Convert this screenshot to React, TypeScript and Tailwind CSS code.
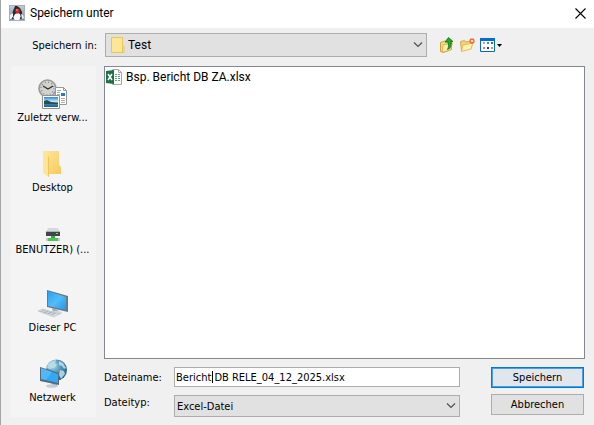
import type { ReactNode } from 'react'

function JavaIcon() {
  return (
    <svg width="16" height="16" viewBox="0 0 16 16" aria-hidden>
      <defs>
        <linearGradient id="java" x1="0" y1="0" x2="0" y2="1">
          <stop offset="0" stopColor="#c3d0dc" />
          <stop offset="1" stopColor="#73869b" />
        </linearGradient>
      </defs>
      <rect x=".5" y=".5" width="15" height="15" fill="url(#java)" stroke="#a3b0bc" />
      <path d="M6 1h2l3 2 2 4v3l1 3h-2l-2-3H6l-2 3H2l1-3 1-4z" fill="#2a2a2a" />
      <path d="M6 9l3-1 2 1 1 4-2 2H6l-2-2z" fill="#f6f7f8" />
      <path d="M1 10l3-2v4l-2 2H1zM12 9l2 1 1 3-2 1z" fill="#eef2f5" />
      <path d="M3 13l1-1 1 2H3zM11 12l2 1-1 1h-1z" fill="#303030" />
      <circle cx="8.500" cy="6" r="2.400" fill="#d32323" />
      <circle cx="8" cy="5" r="1" fill="#f87b70" />
    </svg>
  )
}

function FolderIcon() {
  return (
    <svg width="14" height="16" viewBox="0 0 14 16" aria-hidden>
      <path d="M.5.5h11v9h1.500v6H.5z" fill="#ffe694" stroke="#eac653" />
      <path d="M11.500 9.500v6" stroke="#eac653" />
    </svg>
  )
}

function ExcelIcon() {
  return (
    <svg width="16" height="16" viewBox="0 0 16 16" aria-hidden>
      <path d="M6.500.5h6l3 3v12h-9z" fill="#fff" stroke="#a9a9a9" />
      <path d="M12.500.5v3h3" fill="none" stroke="#a9a9a9" />
      <path d="M9 5.500h2M12 5.500h2M9 7.500h2M12 7.500h2M9 9.500h2M12 9.500h2M9 11.500h2M12 11.500h2" stroke="#5fa57e" />
      <path d="M0 2l8-1v14l-8-1z" fill="#1d7145" />
      <path d="M2 5l4 6M6 5l-4 6" stroke="#fff" strokeWidth="1.500" />
    </svg>
  )
}

function RecentIcon() {
  return (
    <svg width="32" height="32" viewBox="0 0 32 32" aria-hidden>
      <defs>
        <linearGradient id="photo" x1="0" y1="0" x2="0" y2="1">
          <stop offset="0" stopColor="#2c86dc" />
          <stop offset=".5" stopColor="#d9effa" />
          <stop offset=".6" stopColor="#295b5d" />
          <stop offset=".75" stopColor="#377ea3" />
          <stop offset="1" stopColor="#205e9b" />
        </linearGradient>
      </defs>
      <circle cx="10.500" cy="10.500" r="8.500" fill="#d2d2d0" stroke="#9a9a98" strokeWidth="1.600" />
      <circle cx="10.500" cy="10.500" r="6.400" fill="none" stroke="#777" strokeWidth="1.500" strokeDasharray=".7 2.650" />
      <path d="M6 8l5 3 5-3" fill="none" stroke="#303030" strokeWidth="1.300" />
      <path d="M18.500 9.500h8l3 3v14h-11z" fill="#fff" stroke="#989898" />
      <path d="M26.500 9.500v3h3" fill="none" stroke="#989898" />
      <path d="M20 12.500h4M20 14.500h3M20 16.500h3M24 20.500h4M24 22.500h4M24 24.500h4" stroke="#ababab" />
      <path d="M24 15h4v3h-4z" fill="#2879cd" />
      <path d="M5.500 17.500h17v13h-17z" fill="#fff" stroke="#929292" />
      <path d="M7 19h14v10H7z" fill="url(#photo)" />
      <path d="M7 23l3-1 4 2 7 1v1H7z" fill="#23524d" />
    </svg>
  )
}

function DesktopIcon() {
  return (
    <svg width="32" height="32" viewBox="0 0 32 32" aria-hidden>
      <defs>
        <linearGradient id="folder-back" x1="0" y1="0" x2="1" y2="1">
          <stop offset="0" stopColor="#ffe7a0" />
          <stop offset="1" stopColor="#f5ca5c" />
        </linearGradient>
      </defs>
      <path d="M6 3h16v14l2 2v7H12z" fill="url(#folder-back)" />
      <path d="M6 3l6 5v21l-6-4z" fill="#ffe599" />
      <path d="M11 8l1 1v20l-1-1z" fill="#efc65e" />
    </svg>
  )
}

function DriveIcon() {
  return (
    <svg width="16" height="16" viewBox="0 0 16 16" aria-hidden>
      <path d="M3 2h10l2 4H1z" fill="#d7dadc" />
      <path d="M1 5h14v5H1z" fill="#41464a" />
      <path d="M1 5.500h14" stroke="#aeb3b6" />
      <path d="M11 7h2v1h-2z" fill="#4df35a" />
      <path d="M6 10h4v2H6z" fill="#35aa42" />
      <path d="M1 12h14v3H1z" fill="#c1c8c6" />
      <path d="M3 12h10v3H3z" fill="#4ac653" />
    </svg>
  )
}

function ComputerIcon() {
  return (
    <svg width="32" height="32" viewBox="0 0 32 32" aria-hidden>
      <defs>
        <linearGradient id="screen" x1="0" y1="0" x2="1" y2="1">
          <stop offset="0" stopColor="#27a0f2" />
          <stop offset=".5" stopColor="#54bcfa" />
          <stop offset="1" stopColor="#2295e8" />
        </linearGradient>
      </defs>
      <path d="M15 20l6 2v4l-5-1z" fill="#a2adb6" />
      <ellipse cx="19" cy="25" rx="6" ry="2.200" fill="#ccd5da" />
      <path d="M10 2l21 6v16l-21-5z" fill="#667984" />
      <path d="M11 3l18 6v13l-18-4z" fill="url(#screen)" />
      <path d="M1 23l5-2 16 5-5 3z" fill="#dfe2e4" stroke="#b9bfc4" strokeWidth=".7" />
      <path d="M3 23l14 4M5 22l14 4M7 25l4-2M11 26l4-2M15 27l3-2" stroke="#aab1b7" strokeWidth=".8" />
    </svg>
  )
}

function NetworkIcon() {
  return (
    <svg width="32" height="32" viewBox="0 0 32 32" aria-hidden>
      <defs>
        <radialGradient id="globe" cx=".35" cy=".3" r=".75">
          <stop offset="0" stopColor="#a7d3e6" />
          <stop offset=".5" stopColor="#4e94b5" />
          <stop offset="1" stopColor="#20597c" />
        </radialGradient>
      </defs>
      <circle cx="19.500" cy="12" r="10.500" fill="url(#globe)" />
      <path d="M11 6l4-3 4-1-1 3 2 2-3 3-4 1-3-1zM22 3l4 2 3 5-2 1-2-3-3-1zM23 12l4 1 1 3-4 5-2-4z" fill="#c0dfea" opacity=".85" />
      <path d="M14 23l6 2v3l-5-1z" fill="#9da9b1" />
      <ellipse cx="15" cy="28" rx="6" ry="1.800" fill="#c3cdd3" />
      <path d="M3 9l19 6v12L3 23z" fill="#546b79" />
      <path d="M4 10l17 6v9L4 21z" fill="#32a7f5" />
      <path d="M4 10l11 4-6 8-5-1z" fill="#65c2fb" opacity=".6" />
    </svg>
  )
}

function UpIcon() {
  return (
    <svg width="16" height="16" viewBox="0 0 16 16" aria-hidden>
      <path d="M.5 5.500l4-1.500 2 1 5-1v8.500l-8 3-3-1z" fill="#f5d775" stroke="#c9a146" />
      <path d="M3 8l9.500-2-2 7-8 2z" fill="#fff0ac" stroke="#d6af4d" strokeWidth=".8" />
      <path d="M8.500.5L13 4.500h-2c.8 4-.2 7-3.500 8 1.200-2.500 1.400-5 .3-7.500L5 5z" fill="#29a429" stroke="#166e16" strokeWidth=".8" />
    </svg>
  )
}

function NewFolderIcon() {
  return (
    <svg width="16" height="16" viewBox="0 0 16 16" aria-hidden>
      <path d="M.5 4.500l4-1 1 1.500 6-1v7l-10 3z" fill="#f4d274" stroke="#d6ab4c" />
      <path d="M3 8l10-2-2 6-9.500 2.500z" fill="#fff0ac" stroke="#dbb553" strokeWidth=".8" />
      <path d="M12 1v6M9 4h6M10 2l4 4M14 2l-4 4" stroke="#f4582d" strokeWidth="1.200" />
      <circle cx="12" cy="4" r="1.300" fill="#ffe28b" />
    </svg>
  )
}

function ViewIcon() {
  return (
    <svg width="22" height="16" viewBox="0 0 22 16" aria-hidden>
      <path d="M.5 1.500h14v13H.5z" fill="#fff" stroke="#0868ce" />
      <path d="M0 1h15v3H0z" fill="#086bd5" />
      <path d="M3 5h2v2H3z" fill="#a6a6bb" />
      <path d="M7 5h2v2H7z" fill="#3989de" />
      <path d="M11 5h2v2h-2z" fill="#16932b" />
      <path d="M3 10h2v2H3z" fill="#ef765b" />
      <path d="M7 10h2v2H7z" fill="#123f93" />
      <path d="M11 10h2v2h-2z" fill="#cda121" />
      <path d="M17 7h5l-2.500 3z" fill="#000" />
    </svg>
  )
}

function Chevron() {
  return (
    <svg className="pointer-events-none absolute right-1 top-1/2 -translate-y-1/2" width="10" height="6" viewBox="0 0 10 6" aria-hidden>
      <path d="M1 .5l4 4 4-4" fill="none" stroke="#505050" strokeWidth="1.200" />
    </svg>
  )
}

const places: { label: string; icon: ReactNode }[] = [
  { label: 'Zuletzt verw...', icon: <RecentIcon /> },
  { label: 'Desktop', icon: <DesktopIcon /> },
  { label: 'BENUTZER) (...', icon: <DriveIcon /> },
  { label: 'Dieser PC', icon: <ComputerIcon /> },
  { label: 'Netzwerk', icon: <NetworkIcon /> },
]

const fieldBorder = 'w-full rounded-none border border-[#adadad] outline-none'

export default function App() {
  return (
    <div className="flex min-h-screen flex-col border-l border-[#a5a5a5] bg-[#f0f0f0] font-['DejaVu_Sans_Condensed','Liberation_Sans',sans-serif] text-[11px] leading-[15px] text-black">
      <header className="flex h-7 items-center bg-white pb-[2px] pl-2 pr-[6px]">
        <JavaIcon />
        <h1 className="ml-[5px] flex-1 font-[Roboto,sans-serif] text-[12px]">Speichern unter</h1>
        <button type="button" aria-label="Schließen" className="flex h-4 w-4 items-center justify-center">
          <svg width="11" height="11" viewBox="0 0 11 11" aria-hidden>
            <path d="M.5.5l10 10M10.500.5l-10 10" stroke="#000" strokeWidth="1.100" />
          </svg>
        </button>
      </header>

      <form className="flex flex-1 flex-col pb-2 pl-[10px] pr-[9px] pt-[5px]" onSubmit={(e) => e.preventDefault()}>
        <div className="flex h-6 items-center">
          <label htmlFor="folder" className="w-[86px] text-right">Speichern in:</label>
          <div className="relative ml-2 max-w-[322px] flex-1">
            <span className="pointer-events-none absolute left-[6px] top-1">
              <FolderIcon />
            </span>
            <select id="folder" className={`${fieldBorder} block h-6 appearance-none bg-[#e1e1e1] pl-[22px] font-[Roboto,sans-serif] text-[12px]`}>
              <option>Test</option>
            </select>
            <Chevron />
          </div>
          <div className="ml-[13px] flex items-center gap-1">
            <button type="button" aria-label="Übergeordneter Ordner"><UpIcon /></button>
            <button type="button" aria-label="Neuer Ordner"><NewFolderIcon /></button>
            <button type="button" aria-label="Ansicht"><ViewIcon /></button>
          </div>
        </div>

        <div className="mt-[9px] flex flex-1 gap-2">
          <nav className="flex w-[85px] flex-col bg-[#f4f4f4]">
            {places.map((place) => (
              <button key={place.label} type="button" className="flex flex-1 flex-col items-center justify-center whitespace-nowrap pr-[2px]">
                {place.icon}
                <span>{place.label}</span>
              </button>
            ))}
          </nav>

          <div className="flex min-w-0 flex-1 flex-col">
            <ul className="flex-1 border border-[#828790] bg-white p-[1px]">
              <li className="flex h-[18px] items-center gap-1 font-[Roboto,sans-serif] text-[12px]">
                <ExcelIcon />
                Bsp. Bericht DB ZA.xlsx
              </li>
            </ul>

            <div className="mt-2 flex gap-[31px] pr-[1px]">
              <div className="flex flex-1 flex-col gap-2">
                <div className="flex items-center">
                  <label htmlFor="name" className="w-[70px]">Dateiname:</label>
                  <div className="relative flex-1">
                    <input id="name" type="text" defaultValue="Bericht DB RELE_04_12_2025.xlsx" className={`${fieldBorder} block h-5 bg-white px-[1px]`} />
                    <span className="absolute left-[38px] top-1 h-3 w-px bg-black" aria-hidden />
                  </div>
                </div>
                <div className="flex items-start">
                  <label htmlFor="type" className="w-[70px]">Dateityp:</label>
                  <div className="relative flex-1">
                    <select id="type" className={`${fieldBorder} block h-[22px] appearance-none bg-[#e1e1e1] pl-[2px]`}>
                      <option>Excel-Datei</option>
                    </select>
                    <Chevron />
                  </div>
                </div>
              </div>
              <div className="flex w-[93px] flex-col gap-[6px]">
                <button type="submit" className="h-[21px] border border-[#0078d7] bg-[#e1e5ec] shadow-[inset_0_0_0_1px_#4a9fe3]">Speichern</button>
                <button type="button" className="h-[21px] border border-[#adadad] bg-[#e1e1e1]">Abbrechen</button>
              </div>
            </div>
          </div>
        </div>
      </form>
    </div>
  )
}
